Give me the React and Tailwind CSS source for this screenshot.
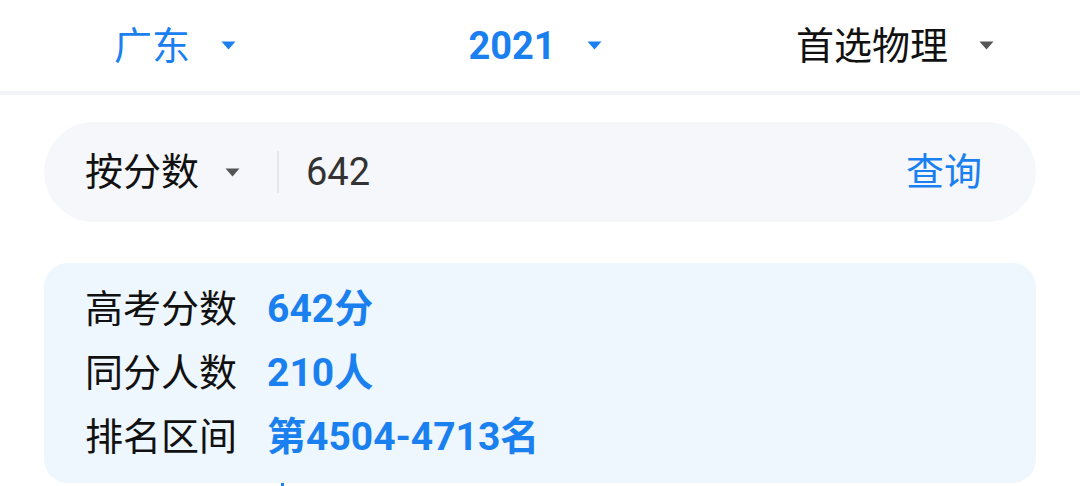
import React from "react";

const Caret = ({ color }) => (
  <svg width="15" height="9" viewBox="0 0 15 9" className="shrink-0">
    <path d="M0.5 0.5 L14.5 0.5 L7.5 8.5 Z" fill={color} />
  </svg>
);

const HeaderItem = ({ label, color, bold, caret }) => (
  <div className="flex items-center justify-center pr-[10px]">
    <span className={`text-[38px] leading-none ${bold ? "font-bold" : "font-normal"}`} style={{ color }}>
      {label}
    </span>
    <span className="ml-[31px] flex items-center">
      <Caret color={caret} />
    </span>
  </div>
);

const Row = ({ label, value }) => (
  <div className="flex items-center h-[64px]">
    <span className="text-[38px] text-[#111] w-[182px]">{label}</span>
    <span className="text-[39px] font-bold text-[#1a80f0]">{value}</span>
  </div>
);

export default function App() {
  return (
    <div
      className="w-[1080px] h-[486px] bg-white overflow-hidden"
      style={{ fontFamily: "Roboto, 'Noto Sans CJK SC', sans-serif" }}
    >
      <div className="h-[95px] grid grid-cols-3 items-center border-b-[4px] border-[#f3f4f7]">
        <HeaderItem label="广东" color="#1a80f0" caret="#1a80f0" />
        <HeaderItem label="2021" color="#1a80f0" bold caret="#1a80f0" />
        <HeaderItem label="首选物理" color="#111111" caret="#555555" />
      </div>

      <div className="mx-[44px] mt-[27px] h-[100px] rounded-full bg-[#f5f7fb] flex items-center pl-[41px] pr-[54px]">
        <span className="text-[38px] text-[#111] leading-none">按分数</span>
        <span className="ml-[26px] flex items-center">
          <Caret color="#555555" />
        </span>
        <div className="ml-[37px] w-[2px] h-[42px] bg-[#e6e8ec]"></div>
        <span className="ml-[27px] text-[38px] text-[#333] leading-none">642</span>
        <span className="ml-auto text-[38px] text-[#1a80f0] leading-none">查询</span>
      </div>

      <div className="mx-[44px] mt-[41px] rounded-[24px] bg-[#eef6fe] py-[14px] pl-[41px]">
        <Row label="高考分数" value="642分" />
        <Row label="同分人数" value="210人" />
        <Row label="排名区间" value="第4504-4713名" />
      </div>
      <div className="ml-[281px] w-[3px] h-[3px] bg-[#1a80f0]"></div>
    </div>
  );
}
